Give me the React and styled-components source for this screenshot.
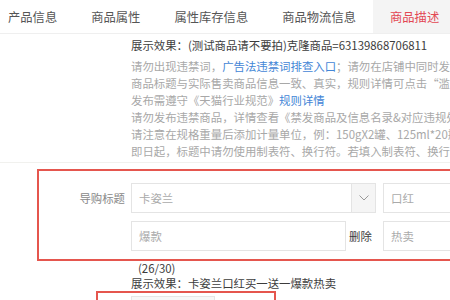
import React from "react";
import styled, { createGlobalStyle } from "styled-components";

const Global = createGlobalStyle`
  html, body { margin: 0; padding: 0; background: #fff; overflow: hidden; }
  body { font-family: "Noto Sans CJK SC", "Noto Sans", sans-serif; }
  * { box-sizing: border-box; }
`;

const Page = styled.div`
  width: 600px;
  height: 300px;
  overflow: hidden;
`;

const Tabs = styled.div`
  display: flex;
  height: 34px;
  margin-left: -9px;
  border-bottom: 1px solid #efefef;
`;

const Tab = styled.div`
  display: flex;
  align-items: center;
  padding: 0 17px;
  height: 33px;
  font-size: 12.3px;
  color: ${(p) => (p.$active ? "#e34753" : "#555")};
  background: ${(p) => (p.$active ? "#f4f4f4" : "transparent")};
  white-space: nowrap;
`;

const Section = styled.div`
  padding: 3px 0 0 131px;
`;

const Preview = styled.div`
  font-size: 11.4px;
  line-height: ${(p) => p.$lh || 16}px;
  color: #3c3c3c;
  white-space: nowrap;
  padding-left: ${(p) => p.$indent || 0}px;
`;

const Notes = styled.div`
  margin-top: 5px;
  font-size: 11.4px;
  line-height: 17px;
  color: #a8a8a8;
`;

const NoteLine = styled.div`
  white-space: nowrap;
`;

const Link = styled.span`
  color: #4386d6;
`;

const Divider = styled.div`
  margin-top: 2px;
  height: 1px;
  background: #f1f1ee;
`;

const RedBox = styled.div`
  margin-left: ${(p) => p.$left}px;
  margin-top: ${(p) => p.$top || 0}px;
  width: ${(p) => p.$width}px;
  border: 2px solid #e5564e;
  padding: ${(p) => p.$pad};
`;

const FieldRow = styled.div`
  display: grid;
  grid-template-columns: 86px 1fr;
  column-gap: 6px;
`;

const Label = styled.div`
  height: 30px;
  display: flex;
  align-items: center;
  justify-content: flex-end;
  font-size: 11.4px;
  color: #888;
`;

const Fields = styled.div`
  display: grid;
  grid-template-columns: 245px 7px 110px;
  grid-template-rows: 30px 30px;
  row-gap: 8px;
`;

const Combo = styled.div`
  display: flex;
`;

const Input = styled.div`
  height: 30px;
  width: ${(p) => (p.$w ? `${p.$w}px` : "100%")};
  flex: ${(p) => (p.$grow ? 1 : "none")};
  border: 1px solid #e4e4e4;
  display: flex;
  align-items: center;
  padding-left: 7px;
  font-size: 11.4px;
  color: #aaa;
  background: #fff;
`;

const ArrowBtn = styled.div`
  width: 24px;
  height: 30px;
  border: 1px solid #e4e4e4;
  border-left: none;
  background: #f5f5f5;
  display: flex;
  align-items: center;
  justify-content: center;
`;

const DelRow = styled.div`
  display: flex;
  align-items: center;
  gap: 3px;
`;

const DelText = styled.span`
  font-size: 11.4px;
  color: #3c3c3c;
  white-space: nowrap;
`;

const GrayBox = styled.div`
  width: 84px;
  height: 20px;
  border: 1px solid #e6e6e6;
  background: #f7f7f7;
`;

export default function App() {
  return (
    <Page>
      <Global />
      <Tabs>
        <Tab>产品信息</Tab>
        <Tab>商品属性</Tab>
        <Tab>属性库存信息</Tab>
        <Tab>商品物流信息</Tab>
        <Tab $active>商品描述</Tab>
      </Tabs>
      <Section>
        <Preview>展示效果：(测试商品请不要拍)克隆商品=63139868706811</Preview>
        <Notes>
          <NoteLine>
            请勿出现违禁词，<Link>广告法违禁词排查入口</Link>；请勿在店铺中同时发布重复商品，
          </NoteLine>
          <NoteLine>商品标题与实际售卖商品信息一致、真实，规则详情可点击“滥发信息”</NoteLine>
          <NoteLine>
            发布需遵守《天猫行业规范》<Link>规则详情</Link>
          </NoteLine>
          <NoteLine>请勿发布违禁商品，详情查看《禁发商品及信息名录&amp;对应违规处理》</NoteLine>
          <NoteLine>请注意在规格重量后添加计量单位，例：150gX2罐、125ml*20瓶</NoteLine>
          <NoteLine>即日起，标题中请勿使用制表符、换行符。若填入制表符、换行符</NoteLine>
        </Notes>
      </Section>
      <Divider />
      <RedBox $left={37} $top={6} $width={500} $pad="12px 0 8px 0">
        <FieldRow>
          <Label>导购标题</Label>
          <Fields>
            <Combo>
              <Input $grow>卡姿兰</Input>
              <ArrowBtn>
                <svg width="10" height="6" viewBox="0 0 10 6">
                  <polyline points="0.5,0.5 5,5 9.5,0.5" fill="none" stroke="#999" strokeWidth="1" />
                </svg>
              </ArrowBtn>
            </Combo>
            <span />
            <Input>口红</Input>
            <DelRow>
              <Input $w={215}>爆款</Input>
              <DelText>删除</DelText>
            </DelRow>
            <span />
            <Input>热卖</Input>
          </Fields>
        </FieldRow>
      </RedBox>
      <Preview $indent={138} $lh={14}>(26/30)</Preview>
      <Preview $indent={131}>展示效果：卡姿兰口红买一送一爆款热卖</Preview>
      <RedBox $left={96} $width={180} $pad="3px 0 0 33px">
        <GrayBox />
      </RedBox>
    </Page>
  );
}
